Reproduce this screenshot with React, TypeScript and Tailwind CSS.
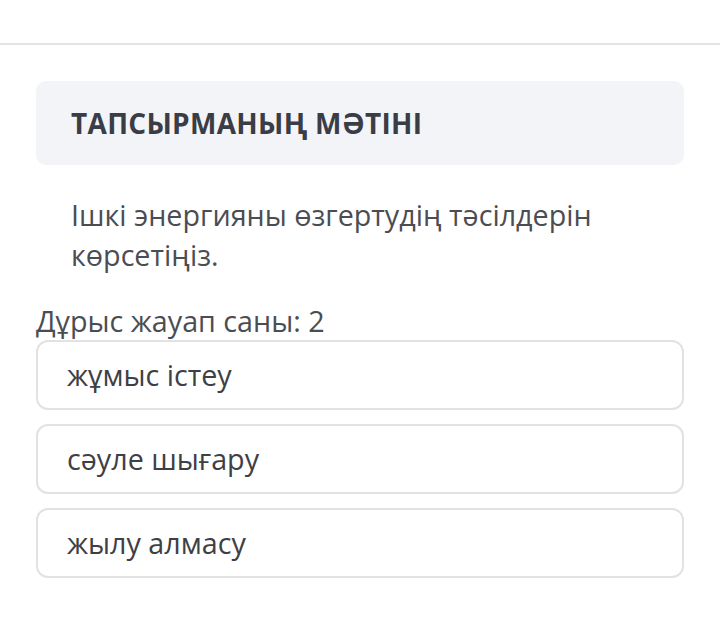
export default function App() {
  const options = ["жұмыс істеу", "сәуле шығару", "жылу алмасу"]

  return (
    <div className="min-h-[639px] bg-white" style={{ fontFamily: '"Open Sans", "Noto Sans", sans-serif' }}>
      {/* top bar */}
      <div className="h-[45px] border-b-2 border-[#e4e4e4]" />

      <div className="px-[36px] pt-[36px]">
        {/* task header */}
        <div className="h-[84px] rounded-[10px] bg-[#f3f4f8] pl-[35px] flex items-center">
          <h2 className="text-[28px] font-bold text-[#3a3d45] tracking-[0.3px]">ТАПСЫРМАНЫҢ МӘТІНІ</h2>
        </div>

        {/* task text */}
        <p className="mt-[30px] pl-[35px] pr-[60px] text-[28.7px] leading-[40px] text-[#4b4d52]">
          Ішкі энергияны өзгертудің тәсілдерін көрсетіңіз.
        </p>

        <p className="mt-[27px] text-[28.7px] leading-[38px] text-[#4b4d52]">Дұрыс жауап саны: 2</p>

        <div className="flex flex-col gap-[14px]">
          {options.map((o) => (
            <div
              key={o}
              className="h-[70px] rounded-[12px] border-2 border-[#e2e2e2] pl-[29px] flex items-center text-[28.7px] text-[#3e4045]"
            >
              {o}
            </div>
          ))}
        </div>
      </div>
    </div>
  )
}
